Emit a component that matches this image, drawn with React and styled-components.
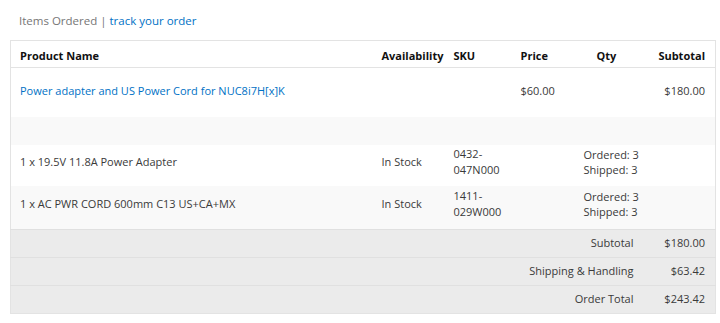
import React from "react";
import styled, { createGlobalStyle } from "styled-components";

const Global = createGlobalStyle`
  html, body { margin: 0; padding: 0; background: #fff; }
  body { font-family: "Open Sans", "Noto Sans", sans-serif; }
`;

const Page = styled.div`
  padding: 11px 6px 0 10px;
`;

const Heading = styled.h2`
  margin: 0 0 10px 9px;
  font-size: 11.5px;
  font-weight: 400;
  line-height: 19px;
  color: #767676;
`;

const Link = styled.a`
  color: #0071c5;
  text-decoration: none;
`;

const Table = styled.table`
  width: 705px;
  border-collapse: collapse;
  border: 1px solid #e3e3e3;
  font-size: 11px;
  color: #3a3a3a;
  table-layout: fixed;
`;

const HeadRow = styled.tr`
  height: 27px;
`;

const Th = styled.th`
  padding: ${(p) => p.$pad || "4px 9px 0"};
  font-weight: 700;
  color: #111;
  line-height: 16px;
  text-align: ${(p) => p.$align || "left"};
  border-bottom: 1px solid #e3e3e3;
  vertical-align: middle;
`;

const Row = styled.tr`
  background: ${(p) => (p.$shade ? "#f9f9f9" : "#fff")};
  height: ${(p) => p.$h}px;
`;

const Td = styled.td`
  padding: ${(p) => p.$pad || "0 9px"};
  text-align: ${(p) => p.$align || "left"};
  vertical-align: middle;
  line-height: 16px;
`;

const ProductLink = styled.a`
  color: #0071c5;
  text-decoration: none;
`;

const QtyBox = styled.div`
  padding-left: 4px;
  line-height: 15px;
`;

const TotalRow = styled.tr`
  background: #ebebeb;
  height: 28px;
  border-top: 1px solid #e0e0e0;
`;

const TotalCell = styled.td`
  padding: 0 10px 2px 9px;
  text-align: right;
  vertical-align: middle;
  line-height: 16px;
  color: #3a3a3a;
`;

const items = [
  { name: "1 x 19.5V 11.8A Power Adapter", avail: "In Stock", sku: "0432-047N000", h: 41, shade: false },
  { name: "1 x AC PWR CORD 600mm C13 US+CA+MX", avail: "In Stock", sku: "1411-029W000", h: 44, shade: true },
];

const totals = [
  ["Subtotal", "$180.00"],
  ["Shipping & Handling", "$63.42"],
  ["Order Total", "$243.42"],
];

export default function App() {
  return (
    <Page>
      <Global />
      <Heading>
        Items Ordered | <Link href="#">track your order</Link>
      </Heading>
      <Table>
        <colgroup>
          <col style={{ width: 362 }} />
          <col style={{ width: 72 }} />
          <col style={{ width: 67 }} />
          <col style={{ width: 64 }} />
          <col style={{ width: 68 }} />
          <col style={{ width: 72 }} />
        </colgroup>
        <thead>
          <HeadRow>
            <Th>Product Name</Th>
            <Th>Availability</Th>
            <Th>SKU</Th>
            <Th>Price</Th>
            <Th $pad="4px 0 0 21px">Qty</Th>
            <Th $align="right" $pad="4px 10px 0 9px">Subtotal</Th>
          </HeadRow>
        </thead>
        <tbody>
          <Row $h={49}>
            <Td $pad="0 9px 2px">
              <ProductLink href="#">Power adapter and US Power Cord for NUC8i7H[x]K</ProductLink>
            </Td>
            <Td />
            <Td />
            <Td $pad="0 9px 2px">$60.00</Td>
            <Td />
            <Td $align="right" $pad="0 10px 2px 9px">$180.00</Td>
          </Row>
          <Row $h={28} $shade>
            <Td colSpan={6} />
          </Row>
          {items.map((it) => (
            <Row key={it.sku} $h={it.h} $shade={it.shade}>
              <Td $pad="0 9px 6px">{it.name}</Td>
              <Td $pad="0 9px 6px">{it.avail}</Td>
              <Td $pad="0 9px 6px">{it.sku}</Td>
              <Td $pad="0 9px 6px" />
              <Td $pad="0 0 6px 4px">
                <QtyBox>
                  Ordered: 3
                  <br />
                  Shipped: 3
                </QtyBox>
              </Td>
              <Td $pad="0 9px 6px" />
            </Row>
          ))}
          {totals.map(([label, value]) => (
            <TotalRow key={label}>
              <TotalCell colSpan={5}>{label}</TotalCell>
              <TotalCell>{value}</TotalCell>
            </TotalRow>
          ))}
        </tbody>
      </Table>
    </Page>
  );
}
